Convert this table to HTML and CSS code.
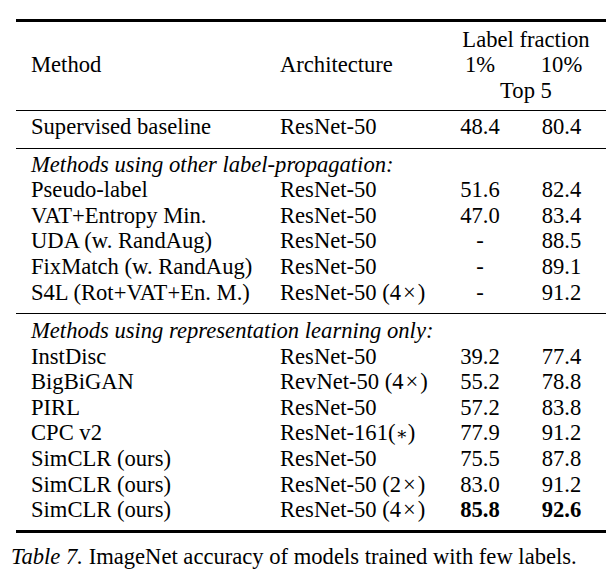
FILE: index.html
```html
<!DOCTYPE html>
<html>
<head>
<meta charset="utf-8">
<link rel="stylesheet" href="styles.css">
</head>
<body>
<div class="page">
  <div class="table">
    <div class="section head">
      <div class="row">
        <div class="c1"></div><div class="c2"></div><div class="span">Label fraction</div>
      </div>
      <div class="row">
        <div class="c1">Method</div><div class="c2">Architecture</div><div class="num">1%</div><div class="num">10%</div>
      </div>
      <div class="row">
        <div class="c1"></div><div class="c2"></div><div class="span">Top 5</div>
      </div>
    </div>
    <div class="section sup">
      <div class="row"><div class="c1">Supervised baseline</div><div class="c2">ResNet-50</div><div class="num">48.4</div><div class="num">80.4</div></div>
    </div>
    <div class="section">
      <div class="row"><div class="group">Methods using other label-propagation:</div></div>
      <div class="row"><div class="c1">Pseudo-label</div><div class="c2">ResNet-50</div><div class="num">51.6</div><div class="num">82.4</div></div>
      <div class="row"><div class="c1">VAT+Entropy Min.</div><div class="c2">ResNet-50</div><div class="num">47.0</div><div class="num">83.4</div></div>
      <div class="row"><div class="c1">UDA (w. RandAug)</div><div class="c2">ResNet-50</div><div class="num">-</div><div class="num">88.5</div></div>
      <div class="row"><div class="c1">FixMatch (w. RandAug)</div><div class="c2">ResNet-50</div><div class="num">-</div><div class="num">89.1</div></div>
      <div class="row"><div class="c1">S4L (Rot+VAT+En. M.)</div><div class="c2">ResNet-50 (4<span class="times">×</span>)</div><div class="num">-</div><div class="num">91.2</div></div>
    </div>
    <div class="section last">
      <div class="row"><div class="group">Methods using representation learning only:</div></div>
      <div class="row"><div class="c1">InstDisc</div><div class="c2">ResNet-50</div><div class="num">39.2</div><div class="num">77.4</div></div>
      <div class="row"><div class="c1">BigBiGAN</div><div class="c2">RevNet-50 (4<span class="times">×</span>)</div><div class="num">55.2</div><div class="num">78.8</div></div>
      <div class="row"><div class="c1">PIRL</div><div class="c2">ResNet-50</div><div class="num">57.2</div><div class="num">83.8</div></div>
      <div class="row"><div class="c1">CPC v2</div><div class="c2">ResNet-161(<span class="ast">∗</span>)</div><div class="num">77.9</div><div class="num">91.2</div></div>
      <div class="row"><div class="c1">SimCLR (ours)</div><div class="c2">ResNet-50</div><div class="num">75.5</div><div class="num">87.8</div></div>
      <div class="row"><div class="c1">SimCLR (ours)</div><div class="c2">ResNet-50 (2<span class="times">×</span>)</div><div class="num">83.0</div><div class="num">91.2</div></div>
      <div class="row"><div class="c1">SimCLR (ours)</div><div class="c2">ResNet-50 (4<span class="times">×</span>)</div><div class="num bold">85.8</div><div class="num bold">92.6</div></div>
    </div>
  </div>
  <p class="caption"><span class="it">Table 7.</span> ImageNet accuracy of models trained with few labels.</p>
</div>
</body>
</html>
```
FILE: styles.css
```css
html, body {
  margin: 0;
  padding: 0;
  background: #ffffff;
}
body {
  font-family: "Liberation Serif", "Times New Roman", serif;
  font-size: 22.6px;
  line-height: 25.6px;
  color: #000000;
}
.page {
  padding-top: 19px;
}
.table {
  margin-left: 16px;
  width: 590px;
  border-top: 3px solid #000;
  border-bottom: 3px solid #000;
}
.section {
  padding: 3px 0 8px;
  border-bottom: 1px solid #000;
}
.section.head {
  padding-top: 4.6px;
  padding-bottom: 6.6px;
}
.section.sup {
  padding-top: 3.1px;
}
.section.last {
  border-bottom: none;
  padding-top: 3.8px;
  padding-bottom: 7px;
}
.row {
  display: grid;
  grid-template-columns: 264px 160px 80px 83px;
  height: 25.6px;
  white-space: nowrap;
}
.c1 {
  padding-left: 15px;
}
.c2 {
  padding-left: 0;
}
.num {
  text-align: center;
}
.bold {
  font-weight: bold;
}
.span {
  grid-column: 3 / 5;
  text-align: center;
  padding-left: 9px;
}
.group {
  grid-column: 1 / 5;
  padding-left: 15px;
  font-style: italic;
}
.times {
  padding: 0 2px;
}
.ast {
  font-family: "DejaVu Serif", serif;
  font-size: 18px;
}
.caption {
  margin: 11.6px 0 0;
  padding-left: 11px;
  white-space: nowrap;
}
.it {
  font-style: italic;
}
```
